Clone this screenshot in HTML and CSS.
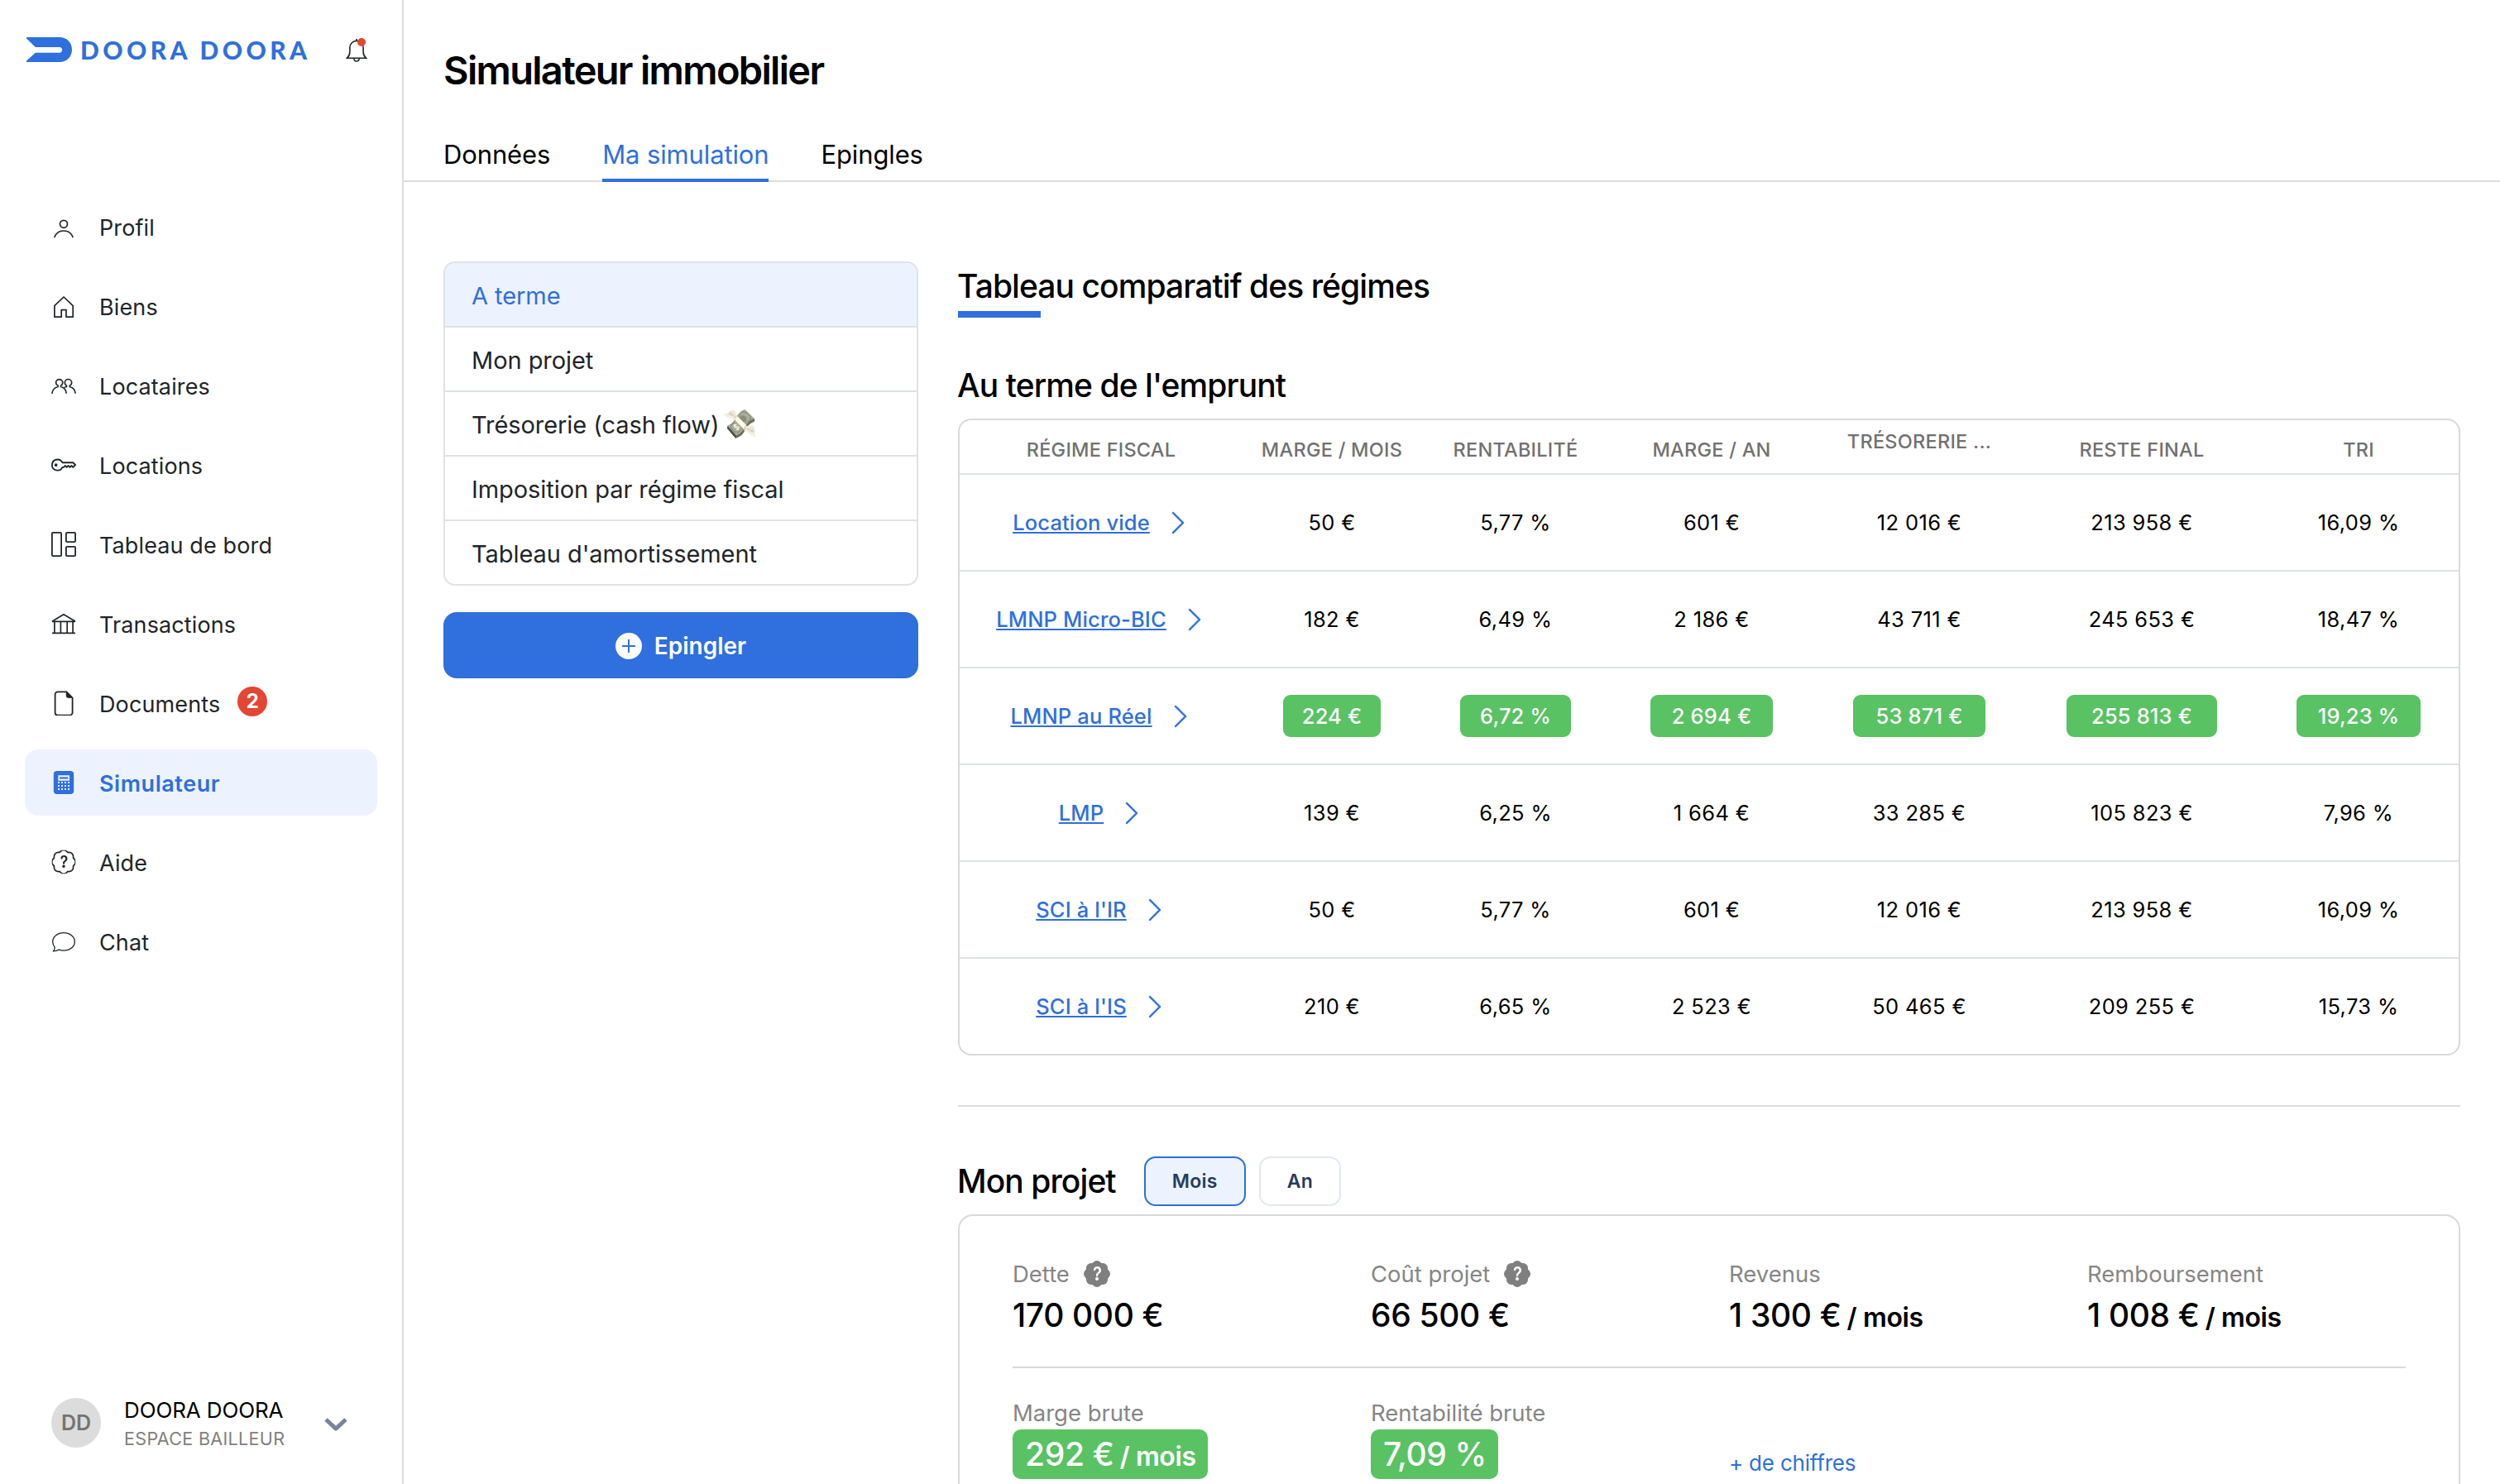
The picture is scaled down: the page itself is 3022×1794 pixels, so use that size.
FILE: index.html
```html
<!DOCTYPE html>
<html lang="fr">
<head>
<meta charset="utf-8">
<title>Simulateur immobilier</title>
<link rel="stylesheet" href="styles.css">
</head>
<body>
<svg class="sprite" aria-hidden="true">
  <symbol id="chevron" viewBox="0 0 16 16"><path d="M4.646 1.646a.5.5 0 0 1 .708 0l6 6a.5.5 0 0 1 0 .708l-6 6a.5.5 0 0 1-.708-.708L10.293 8 4.646 2.354a.5.5 0 0 1 0-.708" fill="currentColor" stroke="currentColor" stroke-width=".25"/></symbol>
  <symbol id="patch" viewBox="0 0 16 16"><path d="M5.933.87a2.89 2.89 0 0 1 4.134 0l.622.638.89-.011a2.89 2.89 0 0 1 2.924 2.924l-.01.89.636.622a2.89 2.89 0 0 1 0 4.134l-.637.622.011.89a2.89 2.89 0 0 1-2.924 2.924l-.89-.01-.622.636a2.89 2.89 0 0 1-4.134 0l-.622-.637-.89.011a2.89 2.89 0 0 1-2.924-2.924l.01-.89-.636-.622a2.89 2.89 0 0 1 0-4.134l.637-.622-.011-.89a2.89 2.89 0 0 1 2.924-2.924l.89.01z"/></symbol>
  <symbol id="question" viewBox="0 0 16 16"><path d="M7.002 11a1 1 0 1 0 2 0 1 1 0 0 0-2 0m1.602-2.027c.04-.534.198-.815.846-1.26.674-.475 1.05-1.09 1.05-1.986 0-1.325-.92-2.227-2.262-2.227-1.02 0-1.792.492-2.1 1.29A1.7 1.7 0 0 0 6 5.48c0 .393.203.64.545.64.272 0 .455-.147.564-.51.158-.592.525-.915 1.074-.915.61 0 1.03.446 1.03 1.084 0 .563-.208.885-.822 1.325-.619.433-.926.914-.926 1.64v.111c0 .428.208.745.585.745.336 0 .504-.24.554-.627"/></symbol>
</svg>
<div class="app">
  <aside class="sidebar">
    <div class="brand">
      <svg class="brand-mark" viewBox="0 0 55 30"><path fill="#2f6fde" d="M0 0H40C49 0 55 6.7 55 15S49 30 40 30H0V28.4L10.8 18.7H39.8C44.3 18.7 44.3 12 39.8 12H10.8L0 1.6Z"/></svg>
      <span class="brand-name">DOORA DOORA</span>
      <svg class="bell" viewBox="0 0 30 30" fill="none" stroke="#212529" stroke-width="1.6"><path d="M3.6 25.2C6.3 22.6 6.9 20.6 6.9 17.5V12.5A8.1 8.1 0 0 1 23.1 12.5V17.5C23.1 20.6 23.7 22.6 26.4 25.2Z"/><path d="M15 4.6V2"/><path d="M11.9 25.4C11.9 30.2 18.1 30.2 18.1 25.4"/><circle cx="21" cy="6" r="5" fill="#e14734" stroke="none"/></svg>
    </div>
    <nav class="nav">
      <a class="nav-item"><svg class="icon" viewBox="0 0 30 30" fill="none" stroke="currentColor" stroke-width="1.7" stroke-linecap="round"><circle cx="15" cy="11.8" r="4.5"/><path d="M4 27.5C6 22.4 10.2 20 15 20S24 22.4 26 27.5"/></svg>Profil</a>
      <a class="nav-item"><svg class="icon" viewBox="0 0 30 30" fill="none" stroke="currentColor" stroke-width="1.7" stroke-linejoin="round"><path d="M3.9 28.2V14.6L15 4 26.2 14.6V28.2H18V19.6H12.2V28.2Z"/></svg>Biens</a>
      <a class="nav-item"><svg class="icon" viewBox="0 0 30 30" fill="none" stroke="currentColor" stroke-width="1.7"><path d="M.9 24.8C1.3 20.4 4 17.5 8.1 16.5V15.3C6.6 14.4 5.6 13.1 5.6 11.7A4.1 4.1 0 0 1 13.8 11.7C13.8 13.1 13 14.4 11.5 15.3V16.5C15.6 17.5 17.9 20.4 18.2 24.8"/><path d="M15.6 17.4C16.4 17 17.2 16.7 18.5 16.5V15.3C17 14.4 16.3 13.1 16.3 11.7A4.1 4.1 0 0 1 24.7 11.7C24.7 13.1 23.9 14.4 22.3 15.3V16.5C26.4 17.5 28.8 20.4 29.1 24.8"/></svg>Locataires</a>
      <a class="nav-item"><svg class="icon" viewBox="0 0 16 16" fill="currentColor"><path d="M0 8a4 4 0 0 1 7.465-2H14a.5.5 0 0 1 .354.146l1.5 1.5a.5.5 0 0 1 0 .708l-1.5 1.5a.5.5 0 0 1-.708 0L13 9.207l-.646.647a.5.5 0 0 1-.708 0L11 9.207l-.646.647a.5.5 0 0 1-.708 0L9 9.207l-.646.647A.5.5 0 0 1 8 10h-.535A4 4 0 0 1 0 8m4-3a3 3 0 1 0 2.712 4.285A.5.5 0 0 1 7.163 9h.63l.853-.854a.5.5 0 0 1 .708 0l.646.647.646-.647a.5.5 0 0 1 .708 0l.646.647.646-.647a.5.5 0 0 1 .708 0l.646.647.793-.793-1-1h-6.63a.5.5 0 0 1-.451-.285A3 3 0 0 0 4 5"/><path d="M4 8a1 1 0 1 1-2 0 1 1 0 0 1 2 0"/></svg>Locations</a>
      <a class="nav-item"><svg class="icon" viewBox="0 0 30 30" fill="none" stroke="currentColor" stroke-width="1.8"><rect x=".9" y=".9" width="11.2" height="28.2" rx="1.2"/><rect x="17.9" y=".9" width="11.2" height="11.2" rx="1.2"/><rect x="17.9" y="17.9" width="11.2" height="11.2" rx="1.2"/></svg>Tableau de bord</a>
      <a class="nav-item"><svg class="icon" viewBox="0 0 30 30" fill="none" stroke="currentColor" stroke-width="1.7" stroke-linejoin="round"><path d="M1.7 12.4V11.8L15 3.8 28.3 11.8V12.4ZM1 26.3H29M3.9 12.4V26M11.4 12.4V26M19.2 12.4V26M26.1 12.4V26"/></svg>Transactions</a>
      <a class="nav-item"><svg class="icon" viewBox="0 0 30 30" fill="none" stroke="currentColor" stroke-width="1.8"><path d="M18.5 1.4H7.6A3 3 0 0 0 4.6 4.4V26.6A3 3 0 0 0 7.6 29.6H22.6A3 3 0 0 0 25.6 26.6V8.5Z"/><path d="M18.2 1.6V6.2A2.2 2.2 0 0 0 20.4 8.4H25.4Z" fill="currentColor" stroke-width=".8"/></svg>Documents<span class="count">2</span></a>
      <a class="nav-item is-active"><svg class="icon" viewBox="0 0 30 30"><rect x="2.8" y="1" width="24.4" height="28" rx="4" fill="currentColor"/><g fill="#ecf3fe"><path fill-rule="evenodd" d="M8.3 6.3H22V12.7H8.3ZM10 8.5V10.5H20.3V8.5Z"/><path d="M8 14h2v2h-2zM12 14h2v2h-2zM16 14h2v2h-2zM20 14h2v2h-2zM8 18h2v2h-2zM12 18h2v2h-2zM16 18h2v2h-2zM20 18h2v2h-2zM8 22h2v2h-2zM12 22h2v2h-2zM16 22h2v2h-2zM20 22h2v2h-2z"/></g></svg>Simulateur</a>
      <a class="nav-item"><svg class="icon" viewBox="-.4 -.4 16.8 16.8" fill="currentColor"><use href="#patch" width="16" height="16" fill="none" stroke="currentColor" stroke-width=".95"/><use href="#question" width="16" height="16"/></svg>Aide</a>
      <a class="nav-item"><svg class="icon" viewBox="0 0 30 30" fill="none" stroke="currentColor" stroke-width="1.3" stroke-linejoin="round"><path d="M2.3 26.9C3.5 25.9 4.2 24 4.3 22.3 2.7 20.4 1.7 18 1.7 15.4 1.7 9.4 7.6 4.6 15 4.6S28.3 9.4 28.3 15.4 22.4 26.2 15 26.2C13 26.2 11 25.8 9.2 25.2 7 26.3 4.6 26.8 2.3 26.9Z"/></svg>Chat</a>
    </nav>
    <div class="user">
      <span class="avatar">DD</span>
      <div class="user-text"><span class="user-name">DOORA DOORA</span><span class="user-role">ESPACE BAILLEUR</span></div>
      <svg class="user-caret" viewBox="0 0 28 16" fill="none" stroke="#78849b" stroke-width="5"><path d="M2 2 14 13.2 26 2" stroke-linejoin="round"/></svg>
    </div>
  </aside>

  <main class="main">
    <header class="header">
      <h1 class="title">Simulateur immobilier</h1>
      <div class="tabs"><a class="tab">Données</a><a class="tab is-active">Ma simulation</a><a class="tab">Epingles</a></div>
    </header>
    <div class="content">
      <div class="side">
        <ul class="menu">
          <li class="menu-item is-active">A terme</li>
          <li class="menu-item">Mon projet</li>
          <li class="menu-item">Trésorerie (cash flow) <span class="emoji">💸</span></li>
          <li class="menu-item">Imposition par régime fiscal</li>
          <li class="menu-item">Tableau d'amortissement</li>
        </ul>
        <button class="pin"><svg class="pin-icon" viewBox="0 0 32 32"><circle cx="16" cy="16" r="16" fill="#fff"/><path d="M16 8.8V23.2M8.8 16H23.2" stroke="#2f6fde" stroke-width="2" stroke-linecap="round"/></svg>Epingler</button>
      </div>

      <div class="results">
        <h2 class="heading heading-main">Tableau comparatif des régimes</h2>
        <h3 class="heading heading-sub">Au terme de l'emprunt</h3>
        <table class="regimes">
          <thead><tr><th>RÉGIME FISCAL</th><th>MARGE / MOIS</th><th>RENTABILITÉ</th><th>MARGE / AN</th><th class="clipped">TRÉSORERIE ...</th><th>RESTE FINAL</th><th>TRI</th></tr></thead>
          <tbody>
            <tr><td><a class="link">Location vide</a><svg class="go"><use href="#chevron"/></svg></td><td>50 €</td><td>5,77 %</td><td>601 €</td><td>12 016 €</td><td>213 958 €</td><td>16,09 %</td></tr>
            <tr><td><a class="link">LMNP Micro-BIC</a><svg class="go"><use href="#chevron"/></svg></td><td>182 €</td><td>6,49 %</td><td>2 186 €</td><td>43 711 €</td><td>245 653 €</td><td>18,47 %</td></tr>
            <tr><td><a class="link">LMNP au Réel</a><svg class="go"><use href="#chevron"/></svg></td><td><span class="best">224 €</span></td><td><span class="best">6,72 %</span></td><td><span class="best">2 694 €</span></td><td><span class="best">53 871 €</span></td><td><span class="best">255 813 €</span></td><td><span class="best">19,23 %</span></td></tr>
            <tr><td><a class="link">LMP</a><svg class="go"><use href="#chevron"/></svg></td><td>139 €</td><td>6,25 %</td><td>1 664 €</td><td>33 285 €</td><td>105 823 €</td><td>7,96 %</td></tr>
            <tr><td><a class="link">SCI à l'IR</a><svg class="go"><use href="#chevron"/></svg></td><td>50 €</td><td>5,77 %</td><td>601 €</td><td>12 016 €</td><td>213 958 €</td><td>16,09 %</td></tr>
            <tr><td><a class="link">SCI à l'IS</a><svg class="go"><use href="#chevron"/></svg></td><td>210 €</td><td>6,65 %</td><td>2 523 €</td><td>50 465 €</td><td>209 255 €</td><td>15,73 %</td></tr>
          </tbody>
        </table>
        <div class="project-head">
          <h3 class="heading">Mon projet</h3>
          <div class="period"><button class="period-btn is-active">Mois</button><button class="period-btn">An</button></div>
        </div>
        <section class="card">
          <div class="stats">
            <div class="stat"><span class="label">Dette<svg class="help" viewBox="0 0 16 16"><use href="#patch" fill="#7f7f7f"/><use href="#question" fill="#fff"/></svg></span><span class="value">170 000 €</span></div>
            <div class="stat"><span class="label">Coût projet<svg class="help" viewBox="0 0 16 16"><use href="#patch" fill="#7f7f7f"/><use href="#question" fill="#fff"/></svg></span><span class="value">66 500 €</span></div>
            <div class="stat"><span class="label">Revenus</span><span class="value">1 300 € <small>/ mois</small></span></div>
            <div class="stat"><span class="label">Remboursement</span><span class="value">1 008 € <small>/ mois</small></span></div>
          </div>
          <div class="stats stats-gross">
            <div class="stat"><span class="label">Marge brute</span><span class="value value-good">292 € <small>/ mois</small></span></div>
            <div class="stat"><span class="label">Rentabilité brute</span><span class="value value-good">7,09 %</span></div>
            <div class="stat"><a class="more">+ de chiffres</a></div>
          </div>
        </section>
      </div>
    </div>
  </main>
</div>
</body>
</html>
```
FILE: styles.css
```css
* { box-sizing: border-box; }

body {
  margin: 0;
  background: #fff;
  color: #000;
  font-family: "Inter", "Liberation Sans", sans-serif;
  overflow: hidden;
}

h1, h2, h3, ul { margin: 0; padding: 0; }

button { font-family: inherit; }

.sprite { display: none; }

.app {
  display: grid;
  grid-template-columns: 488px 1fr;
  grid-template-rows: 1794px;
}

.main { overflow: hidden; }

/* Sidebar */
.sidebar {
  display: flex;
  flex-direction: column;
  border-right: 2px solid #dcdcdc;
}

.brand {
  display: flex;
  align-items: center;
  height: 120px;
  padding-left: 32px;
}

.brand-mark { width: 55px; height: 30px; }

.brand-name {
  width: 329px;
  padding: 0 0 1px 10px;
  color: #2f6fde;
  font: 900 30px/38px "Lato", sans-serif;
  letter-spacing: 4.4px;
}

.bell { width: 30px; height: 30px; margin-right: 40px; }

.nav {
  display: flex;
  flex-direction: column;
  gap: 16px;
  margin-top: 114px;
  padding: 0 30px;
}

.nav-item {
  display: flex;
  align-items: center;
  height: 80px;
  padding: 2px 0 0 32px;
  border-radius: 16px;
  color: #212529;
  font-size: 27px;
  letter-spacing: .12px;
}

.nav-item.is-active {
  background: #ecf3fe;
  color: #2f6fde;
  font-weight: 600;
  letter-spacing: .55px;
}

.icon { width: 30px; height: 30px; margin: 0 28px 2px 0; }

.count {
  width: 36px;
  height: 36px;
  margin: 0 0 6px 21px;
  border-radius: 50%;
  background: #e14734;
  color: #fff;
  font-size: 24px;
  font-weight: 700;
  line-height: 35px;
  text-align: center;
}

.user {
  display: flex;
  align-items: center;
  margin-top: auto;
  padding: 0 0 38px 62px;
}

.avatar {
  width: 60px;
  height: 60px;
  margin-bottom: 1px;
  border-radius: 50%;
  background: #dcdcdc;
  color: #737373;
  font-size: 25px;
  font-weight: 600;
  line-height: 60px;
  text-align: center;
}

.user-text {
  display: flex;
  flex-direction: column;
  width: 239px;
  margin: 0 0 0 28px;
  padding-top: 3px;
}

.user-name { font-size: 26px; line-height: 34px; letter-spacing: -.12px; }

.user-role { color: #808080; font-size: 21.5px; line-height: 34px; letter-spacing: .33px; }

.user-caret { width: 28px; height: 16px; margin: 3px 0 0 3px; }

/* Header */
.header {
  height: 220px;
  padding: 57px 48px 0;
  border-bottom: 2px solid #dcdcdc;
}

.title { font-size: 47px; font-weight: 560; line-height: 56px; letter-spacing: -1.68px; }

.tabs { display: flex; gap: 63px; margin-top: 53px; }

.tab {
  height: 54px;
  border-bottom: 4px solid transparent;
  font-size: 31px;
  line-height: 42px;
  letter-spacing: -.13px;
}

.tab.is-active { border-color: #2f6fde; color: #2f6fde; }

/* Content */
.content {
  display: grid;
  grid-template-columns: 574px 1fr;
  gap: 48px;
  padding: 96px 48px 0;
}

.menu {
  border: 2px solid #dee2e6;
  border-radius: 14px;
  overflow: hidden;
  list-style: none;
}

.menu-item {
  height: 78px;
  padding-left: 32px;
  border-bottom: 2px solid #dee2e6;
  color: #212529;
  font-size: 29px;
  line-height: 79px;
  letter-spacing: -.06px;
  white-space: nowrap;
}

.menu-item:last-child { height: 76px; border-bottom: 0; }

.menu-item.is-active { background: #ecf3fe; color: #2f6fde; }

.emoji { margin-left: -5px; font-size: 34px; line-height: 1; filter: grayscale(.85) sepia(.25); }

.pin {
  display: flex;
  align-items: center;
  justify-content: center;
  gap: 15px;
  width: 100%;
  height: 80px;
  margin-top: 32px;
  padding: 1px 0 0;
  border: 0;
  border-radius: 16px;
  background: #2f6fde;
  color: #fff;
  font-size: 28px;
  font-weight: 600;
}

.pin-icon { width: 32px; height: 32px; }

.heading { font-size: 39px; font-weight: 550; line-height: 48px; letter-spacing: -.93px; text-indent: -1px; }

.heading-main { padding-top: 6px; }

.heading-main::after {
  content: "";
  display: block;
  width: 100px;
  height: 8px;
  margin-top: 6px;
  background: #2f6fde;
}

.heading-sub { margin: 58px 0 16px; }

/* Tax regime comparison */
.regimes {
  display: block;
  border: 2px solid #d9d9d9;
  border-radius: 16px;
}

.regimes thead, .regimes tbody { display: block; }

.regimes tr {
  display: grid;
  grid-template-columns: 342px 216px 228px 246px 256px 282px 242px;
  height: 117px;
  border-bottom: 2px solid #dee2e6;
}

.regimes thead tr { height: 66px; }

.regimes tbody tr:last-child { height: 115px; border-bottom: 0; }

.regimes th, .regimes td {
  display: flex;
  align-items: center;
  justify-content: center;
  padding: 0;
}

.regimes th {
  padding-top: 7px;
  color: #717171;
  font-size: 23.5px;
  font-weight: 500;
  letter-spacing: .25px;
}

.regimes .clipped { padding: 0 0 13px; }

.regimes td { font-size: 25.5px; letter-spacing: .35px; }

.regimes td:first-child { padding-left: 2px; }

.link {
  color: #2f6fde;
  font-weight: 500;
  letter-spacing: .15px;
  text-decoration: underline 2px;
  text-underline-offset: 2px;
}

.go { width: 32px; height: 32px; margin-left: 18px; color: #2f6fde; }

.best {
  padding: 0 10.6%;
  border-radius: 9px;
  background: #59c263;
  color: #fff;
  font-weight: 500;
  line-height: 51px;
  letter-spacing: .15px;
}

/* Project summary */
.project-head {
  display: flex;
  align-items: center;
  gap: 34px;
  margin: 60px 0 10px;
  padding-top: 60px;
  border-top: 2px solid #dcdcdc;
}

.period { display: flex; gap: 16px; }

.period-btn {
  height: 60px;
  padding: 0 32px;
  border: 2px solid #e2e8f0;
  border-radius: 14px;
  background: #fff;
  color: #283b5b;
  font-size: 23px;
  font-weight: 600;
  letter-spacing: .3px;
}

.period-btn.is-active { border-color: #2f6fde; background: #ecf3fe; }

.card {
  height: 500px;
  padding: 50px 64px 0;
  border: 2px solid #d9d9d9;
  border-radius: 18px;
}

.stats {
  display: grid;
  grid-template-columns: repeat(4, 1fr);
  gap: 48px;
  height: 134px;
  border-bottom: 2px solid #d9d9d9;
}

.stats-gross { margin-top: 34px; border: 0; }

.stat {
  display: flex;
  flex-direction: column;
  align-items: flex-start;
  white-space: nowrap;
}

.label {
  display: flex;
  align-items: center;
  height: 40px;
  color: #868686;
  font-size: 27.5px;
  letter-spacing: -.02px;
}

.help { width: 32px; height: 32px; margin-left: 17px; }

.value { margin-top: 8px; font-size: 39px; font-weight: 530; line-height: 44px; letter-spacing: -.35px; }

.value small { margin-left: -3px; font-size: 32px; font-weight: 600; line-height: 1; letter-spacing: -.4px; }

.value-good {
  margin-top: 0;
  padding: 0 14px 0 15px;
  border-radius: 10px;
  background: #59c263;
  color: #fff;
  line-height: 60px;
}

.more { margin-top: 61px; color: #2f6fde; font-size: 26px; line-height: 40px; letter-spacing: -.2px; }
```
